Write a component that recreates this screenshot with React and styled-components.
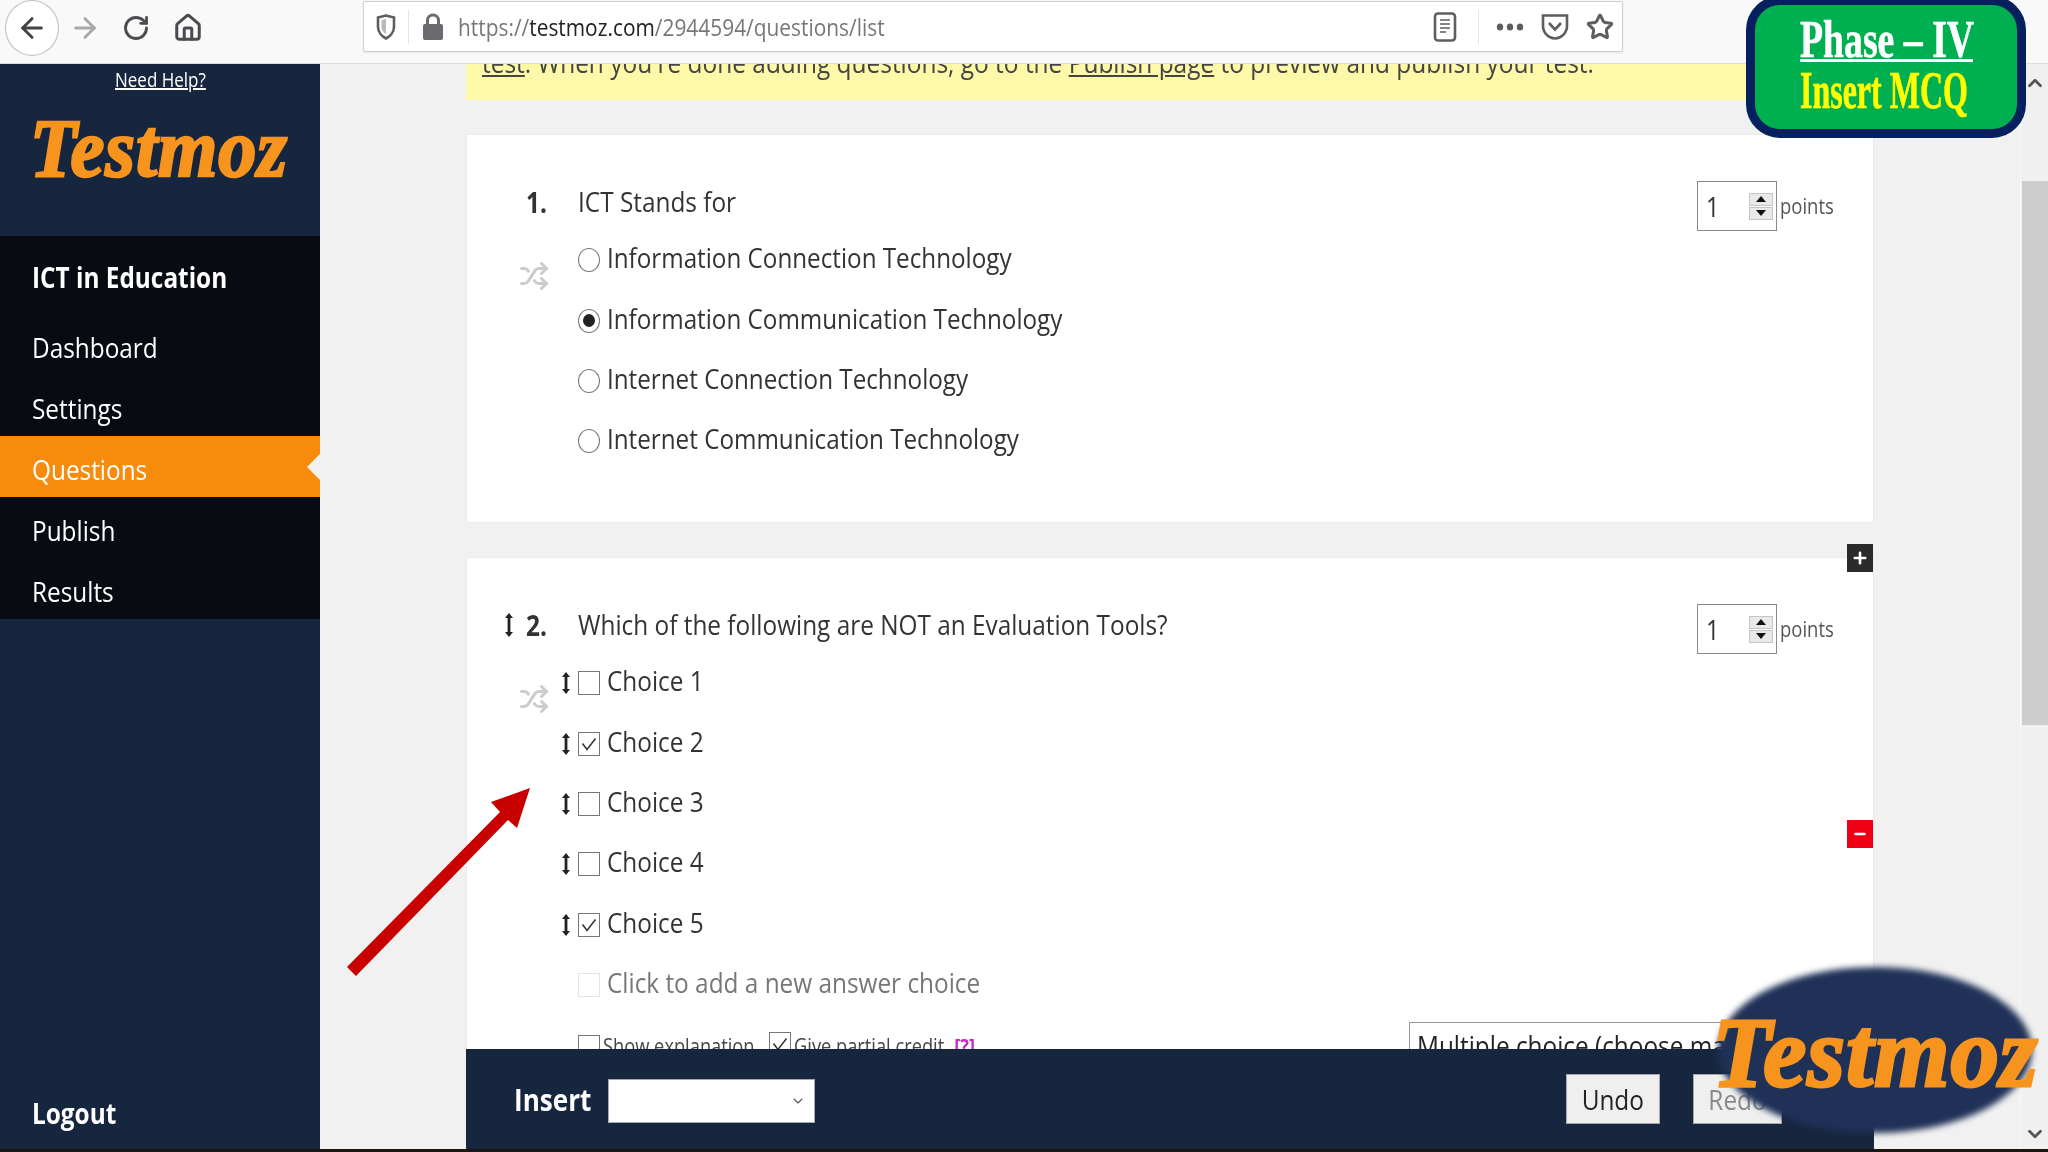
import React from 'react';
import styled, { createGlobalStyle, css } from 'styled-components';
import { ArrowLeft, ArrowRight, RotateCw, House, Star, Shuffle, ChevronUp, ChevronDown, Plus, Minus } from 'lucide-react';

const GlobalStyle = createGlobalStyle`
  html, body { margin: 0; padding: 0; background: #f1f1f2; overflow: hidden; }
  * { box-sizing: border-box; }
`;

const squeeze = css`
  display: inline-block;
  white-space: nowrap;
  transform: scaleX(${props => props.$sx || 0.87});
  transform-origin: left center;
`;

const Page = styled.div`
  position: relative;
  width: 2048px;
  height: 1152px;
  display: flex;
  flex-direction: column;
  overflow: hidden;
  font-family: "Open Sans", sans-serif;
  color: #333;
`;

//===================================================
// ================= Browser toolbar ================
//===================================================

const Toolbar = styled.div`
  height: 64px;
  flex: none;
  display: flex;
  align-items: flex-start;
  padding-left: 5px;
  background: #f9f9fa;
  border-bottom: 1px solid #dcdcdc;
`;

const BackButton = styled.div`
  width: 54px;
  height: 56px;
  border-radius: 50%;
  background: #fff;
  border: 1px solid #bdbdbd;
  display: flex;
  align-items: center;
  justify-content: center;
  color: #444;
`;

const NavIcon = styled.div`
  width: 51.5px;
  height: 56px;
  display: flex;
  align-items: center;
  justify-content: center;
  color: ${props => props.$dim ? '#a9a9ab' : '#4a4a4f'};
`;

const AddressBar = styled.div`
  margin: 1px 0 0 149px;
  width: 1260px;
  height: 51px;
  display: flex;
  align-items: center;
  background: #fff;
  border: 1px solid #cfcfcf;
  border-radius: 2px;
  box-shadow: 0 1px 2px rgba(0, 0, 0, 0.08);
  color: #5d5d62;
`;

const BarIcon = styled.div`
  width: ${props => props.$w}px;
  flex: none;
  display: flex;
  align-items: center;
  justify-content: center;
`;

const BarDivider = styled.div`
  width: 1px;
  height: 34px;
  flex: none;
  background: #e6e6e6;
`;

const Url = styled.div`
  ${squeeze}
  flex: none;
  width: 722px;
  margin-left: 1px;
  font-size: 24px;
  color: #77777b;
  b { font-weight: 400; color: #222; }
`;

//===================================================
// ==================== Sidebar =====================
//===================================================

const Body = styled.div`
  flex: 1;
  min-height: 0;
  display: flex;
`;

const Sidebar = styled.div`
  width: 320px;
  flex: none;
  display: flex;
  flex-direction: column;
  background: #17263f;
  color: #fff;
`;

const SideHead = styled.div`
  height: 172px;
  flex: none;
  text-align: center;
`;

const NeedHelp = styled.a`
  ${squeeze}
  margin-top: 2px;
  font-size: 20px;
  line-height: 28px;
  color: #fff;
  text-decoration: underline;
  transform-origin: center;
`;

const LogoText = styled.div`
  ${squeeze}
  font-family: "Liberation Serif", serif;
  font-weight: 700;
  font-style: italic;
  font-size: ${props => props.$size}px;
  line-height: 1;
  letter-spacing: 1px;
  color: #f7941e;
  -webkit-text-stroke: ${props => props.$stroke}px #f7941e;
`;

const SideLogo = styled.div`
  padding: 14px 0 0 30px;
  text-align: left;
  height: 90px;
`;

const SideNav = styled.div`
  background: #080b12;
  flex: none;
`;

const NavTitle = styled.div`
  height: 78px;
  padding: 3px 0 0 32px;
  display: flex;
  align-items: center;
  font-size: 28px;
  font-weight: 700;
  span { ${squeeze} }
`;

const NavItem = styled.div`
  position: relative;
  height: 61px;
  padding: 4px 0 0 32px;
  display: flex;
  align-items: center;
  font-size: 28px;
  background: ${props => props.$active ? '#f68b0c' : 'transparent'};
  span { ${squeeze} }
  ${props => props.$active && css`
    &::after {
      content: '';
      position: absolute;
      right: 0;
      top: 18px;
      border-style: solid;
      border-width: 13px 13px 13px 0;
      border-color: transparent #f1f1f2 transparent transparent;
    }
  `}
`;

const Logout = styled.div`
  margin-top: auto;
  padding: 0 0 17px 32px;
  font-size: 28px;
  font-weight: 700;
  span { ${squeeze} }
`;

//===================================================
// ================== Main content ==================
//===================================================

const Main = styled.div`
  flex: 1;
  min-width: 0;
  display: flex;
  flex-direction: column;
  padding: 0 146px;
  background: #f1f1f2;
`;

const Scroller = styled.div`
  flex: 1;
  min-height: 0;
  overflow: hidden;
  display: flex;
  flex-direction: column;
  gap: 34px;
`;

const Notice = styled.div`
  height: 36px;
  flex: none;
  overflow: hidden;
  padding-left: 16px;
  background: #fdf9a9;
  font-size: 28px;
  color: #444;
  span {
    ${squeeze}
    display: block;
    width: max-content;
    margin-top: -20px;
    line-height: 36px;
  }
  a { color: #444; text-decoration: underline; }
`;

const Card = styled.div`
  position: relative;
  flex: ${props => props.$fill ? '1' : 'none'};
  height: ${props => props.$fill ? 'auto' : '389px'};
  display: flex;
  flex-direction: column;
  background: #fff;
  border: 1px solid #ebebeb;
`;

const CardClip = styled.div`
  flex: 1;
  min-height: 0;
  overflow: hidden;
  padding-top: 39px;
`;

const QuestionBody = styled.div`
  display: flex;
  align-items: flex-start;
  padding-right: 42px;
`;

const LeftCol = styled.div`
  width: 93px;
  flex: none;
  padding-left: 37px;
`;

const NumberRow = styled.div`
  height: 56px;
  display: flex;
  align-items: center;
  font-size: 28px;
  font-weight: 700;
  color: #333;
  span { ${squeeze} }
`;

const HandleSlot = styled.div`
  width: 22px;
  flex: none;
  display: flex;
  align-items: center;
  color: #222;
`;

const ShuffleIcon = styled.div`
  margin: 32px 0 0 15px;
  height: 28px;
  color: #ccc;
  display: flex;
  align-items: center;
`;

const Content = styled.div`
  flex: 1;
  min-width: 0;
`;

const QuestionTitle = styled.div`
  height: 56px;
  margin-left: 18px;
  display: flex;
  align-items: center;
  font-size: 28px;
  color: #333;
  span { ${squeeze} margin-top: -2px; }
`;

const OptionRow = styled.div`
  height: 60.4px;
  display: flex;
  align-items: center;
`;

const OptionHandle = styled.div`
  width: 18px;
  flex: none;
  padding-left: 1px;
  display: flex;
  align-items: center;
  color: #222;
`;

const OptionLabel = styled.div`
  margin: 0 0 6px 7px;
  font-size: 28px;
  color: ${props => props.$muted ? '#77777b' : '#333'};
  span { ${squeeze} }
`;

const Radio = styled.div`
  width: 22px;
  height: 24px;
  flex: none;
  border-radius: 50%;
  border: 1.5px solid #767676;
  display: flex;
  align-items: center;
  justify-content: center;
  &::after {
    content: '';
    display: ${props => props.$on ? 'block' : 'none'};
    width: 12px;
    height: 13px;
    border-radius: 50%;
    background: #222;
  }
`;

const CheckBox = styled.div`
  width: 22px;
  height: 24px;
  flex: none;
  display: flex;
  align-items: center;
  justify-content: center;
  background: #fff;
  border: 1.5px solid ${props => props.$muted ? '#e4e4e4' : '#767676'};
  color: #333;
`;

const Spinner = styled.div`
  width: 80px;
  height: 50px;
  margin-top: 7px;
  flex: none;
  display: flex;
  align-items: center;
  justify-content: space-between;
  padding: 0 3px 0 8px;
  border: 1.5px solid #8a8a8a;
  font-size: 27px;
  span { ${squeeze} }
`;

const SpinButtons = styled.div`
  width: 24px;
  height: 27px;
  display: flex;
  flex-direction: column;
  gap: 1px;
`;

const SpinButton = styled.div`
  flex: 1;
  display: flex;
  align-items: center;
  justify-content: center;
  background: #e9e9e9;
  border: 1px solid #c4c4c4;
  &::after {
    content: '';
    border-left: 5px solid transparent;
    border-right: 5px solid transparent;
    ${props => props.$down ? 'border-top: 6px solid #111;' : 'border-bottom: 6px solid #111;'}
  }
`;

const Points = styled.div`
  width: 51px;
  margin: 7px 0 0 3px;
  height: 50px;
  display: flex;
  align-items: center;
  font-size: 22px;
  color: #555;
  span { ${squeeze} margin-top: -3px; }
`;

const OptionsLine = styled.div`
  position: relative;
  display: flex;
  align-items: flex-start;
  margin-top: 7px;
  padding-left: 111px;
  height: 60px;
`;

const SmallBox = styled(CheckBox)`
  margin-top: ${props => props.$mt}px;
`;

const SmallLabel = styled.div`
  width: ${props => props.$w}px;
  flex: none;
  margin: 10px 0 0 3px;
  font-size: 21px;
  color: #444;
  span { ${squeeze} }
  i {
    font-style: normal;
    font-weight: 700;
    color: #c32bc3;
    margin-left: 6px;
  }
`;

const TypeSelect = styled.div`
  margin-left: auto;
  margin-right: 84px;
  width: 380px;
  height: 60px;
  flex: none;
  padding: 3px 0 0 7px;
  border: 1.5px solid #9a9a9a;
  font-size: 28px;
  color: #222;
  span { ${squeeze} }
`;

const SideButton = styled.div`
  position: absolute;
  right: 0;
  top: ${props => props.$top}px;
  width: 26px;
  height: 28px;
  display: flex;
  align-items: center;
  justify-content: center;
  color: #fff;
  background: ${props => props.$bg};
`;

//===================================================
// ==================== Footer ======================
//===================================================

const Footer = styled.div`
  position: relative;
  height: 100px;
  flex: none;
  display: flex;
  align-items: center;
  padding-left: 48px;
  background: #17263f;
  color: #fff;
`;

const InsertLabel = styled.div`
  width: 94px;
  font-size: 30px;
  font-weight: 700;
  span { ${squeeze} }
`;

const InsertSelect = styled.div`
  width: 207px;
  height: 44px;
  margin-top: 4px;
  display: flex;
  align-items: center;
  justify-content: flex-end;
  padding-right: 8px;
  background: #fff;
  border: 1px solid #a4a8b4;
  color: #555;
`;

const ActionButton = styled.div`
  width: ${props => props.$w}px;
  height: 50px;
  margin: 0 0 0 ${props => props.$ml}px;
  display: flex;
  align-items: center;
  justify-content: center;
  background: #efefef;
  border: 1px solid #a8a8a8;
  font-size: 28px;
  color: ${props => props.$off ? '#8a8a8a' : '#222'};
  span { ${squeeze} transform-origin: center; }
`;

const Scrollbar = styled.div`
  width: 28px;
  flex: none;
  display: flex;
  flex-direction: column;
  align-items: center;
  background: #f0f0f1;
  border-left: 1px solid #fafafa;
  color: #555;
`;

const ScrollArrow = styled.div`
  height: ${props => props.$h}px;
  flex: none;
  display: flex;
  align-items: center;
  justify-content: center;
`;

const ScrollGap = styled.div`
  flex: ${props => props.$h ? 'none' : '1'};
  height: ${props => props.$h ? `${props.$h}px` : 'auto'};
`;

const ScrollThumb = styled.div`
  width: 26px;
  height: 544px;
  flex: none;
  background: #cdcdcd;
`;

const BottomStrip = styled.div`
  height: 3px;
  flex: none;
  background: #1c1512;
`;

//===================================================
// ==================== Overlays ====================
//===================================================

const PhaseBadge = styled.div`
  position: absolute;
  left: 1746px;
  top: -4px;
  width: 280px;
  height: 142px;
  padding-top: 12px;
  display: flex;
  flex-direction: column;
  align-items: center;
  background: #00b050;
  border: 9px solid #04205f;
  border-radius: 34px;
  font-family: "Liberation Serif", serif;
  font-weight: 700;
`;

const PhaseLine = styled.div`
  width: 173px;
  height: ${props => props.$h}px;
  color: ${props => props.$color};
  font-size: 52px;
  line-height: ${props => props.$h}px;
  white-space: nowrap;
  border-bottom: ${props => props.$rule ? '3px solid #fff' : 'none'};
  -webkit-text-stroke: 0.6px ${props => props.$color};
  span { ${squeeze} }
`;

const RedArrow = styled.svg`
  position: absolute;
  left: 340px;
  top: 780px;
`;

const Blob = styled.div`
  position: absolute;
  left: 1718px;
  top: 967px;
  width: 314px;
  height: 166px;
  border-radius: 50%;
  background: #1f3157;
  filter: blur(3px);
`;

const BlobLogo = styled.div`
  position: absolute;
  left: 1712px;
  top: 1003px;
`;

//===================================================
// ================== Small drawings ================
//===================================================

const UpDown = ({ h = 20 }) => (
  <svg width="10" height={h} viewBox={`0 0 10 ${h}`}>
    <path d={`M5 0L9 5H6.4V${h - 5}H9L5 ${h}L1 ${h - 5}H3.6V5H1Z`} fill="currentColor" />
  </svg>
);

const Tick = () => (
  <svg width="18" height="18" viewBox="0 0 18 18" fill="none">
    <path d="M2.5 8.5L7 14.5L15.5 3.5" stroke="currentColor" strokeWidth="1.5" />
  </svg>
);

const ShieldIcon = () => (
  <svg width="20" height="26" viewBox="0 0 20 26" fill="none">
    <path d="M2 3.5L10 1.5L18 3.5V13C18 19 13 23 10 24.5C7 23 2 19 2 13Z" stroke="#5d5d62" strokeWidth="2.6" />
    <path d="M10 5V20C7.5 18.5 5.5 16 5.5 13V6Z" fill="#b9b9bb" />
  </svg>
);

const LockIcon = () => (
  <svg width="22" height="28" viewBox="0 0 22 28">
    <path d="M5.5 12V7.5a5.5 5.5 0 0 1 11 0V12" fill="none" stroke="#6a6a6f" strokeWidth="3" />
    <rect x="1" y="11" width="20" height="16" rx="2" fill="#6a6a6f" />
  </svg>
);

const ReaderIcon = () => (
  <svg width="24" height="30" viewBox="0 0 24 30" fill="none">
    <rect x="2" y="1.5" width="20" height="27" rx="3" stroke="#5d5d62" strokeWidth="2.6" />
    <path d="M7 8H17M7 12H17M7 16H17M7 20H13" stroke="#5d5d62" strokeWidth="1.6" />
  </svg>
);

const DotsIcon = () => (
  <svg width="28" height="10" viewBox="0 0 28 10">
    <ellipse cx="4" cy="5" rx="3.2" ry="3.6" fill="#5d5d62" />
    <ellipse cx="14" cy="5" rx="3.2" ry="3.6" fill="#5d5d62" />
    <ellipse cx="24" cy="5" rx="3.2" ry="3.6" fill="#5d5d62" />
  </svg>
);

const PocketIcon = () => (
  <svg width="28" height="28" viewBox="0 0 28 28" fill="none">
    <path d="M2 2.5H26V13C26 20 20 25.5 14 25.5C8 25.5 2 20 2 13Z" stroke="#5d5d62" strokeWidth="2.6" />
    <path d="M8 10L14 16.5L20 10" stroke="#5d5d62" strokeWidth="2.6" />
  </svg>
);

const questionOne = [
  { text: 'Information Connection Technology' },
  { text: 'Information Communication Technology', on: true },
  { text: 'Internet Connection Technology' },
  { text: 'Internet Communication Technology' },
];

const questionTwo = [
  { text: 'Choice 1' },
  { text: 'Choice 2', on: true },
  { text: 'Choice 3' },
  { text: 'Choice 4' },
  { text: 'Choice 5', on: true },
];

const navItems = ['Dashboard', 'Settings', 'Questions', 'Publish', 'Results'];

const PointsField = () => (
  <>
    <Spinner>
      <span>1</span>
      <SpinButtons>
        <SpinButton />
        <SpinButton $down />
      </SpinButtons>
    </Spinner>
    <Points $sx={0.84}><span>points</span></Points>
  </>
);

export default function App() {
  return (
    <Page>
      <GlobalStyle />
      <Toolbar>
        <BackButton><ArrowLeft size={32} strokeWidth={2.2} /></BackButton>
        <NavIcon $dim><ArrowRight size={32} strokeWidth={2.2} /></NavIcon>
        <NavIcon><RotateCw size={28} strokeWidth={2.4} /></NavIcon>
        <NavIcon><House size={30} strokeWidth={2.4} /></NavIcon>
        <AddressBar>
          <BarIcon $w={44}><ShieldIcon /></BarIcon>
          <BarDivider />
          <BarIcon $w={48}><LockIcon /></BarIcon>
          <Url>https://<b>testmoz.com</b>/2944594/questions/list</Url>
          <BarIcon $w={250}><span /></BarIcon>
          <BarIcon $w={30}><ReaderIcon /></BarIcon>
          <BarIcon $w={18}><span /></BarIcon>
          <BarDivider />
          <BarIcon $w={62}><DotsIcon /></BarIcon>
          <BarIcon $w={28}><PocketIcon /></BarIcon>
          <BarIcon $w={62}><Star size={28} strokeWidth={2.6} /></BarIcon>
        </AddressBar>
      </Toolbar>

      <Body>
        <Sidebar>
          <SideHead>
            <NeedHelp $sx={0.85}>Need Help?</NeedHelp>
            <SideLogo>
              <LogoText $size={82} $stroke={2.6} $sx={0.93}>Testmoz</LogoText>
            </SideLogo>
          </SideHead>
          <SideNav>
            <NavTitle><span>ICT in Education</span></NavTitle>
            {navItems.map(item => (
              <NavItem key={item} $active={item === 'Questions'}><span>{item}</span></NavItem>
            ))}
          </SideNav>
          <Logout><span>Logout</span></Logout>
        </Sidebar>

        <Main>
          <Scroller>
            <Notice $sx={0.873}>
              <span><a>test</a>. When you're done adding questions, go to the <a>Publish page</a> to preview and publish your test.</span>
            </Notice>

            <Card>
              <CardClip>
                <QuestionBody>
                  <LeftCol>
                    <NumberRow><HandleSlot /><span>1.</span></NumberRow>
                    <ShuffleIcon><Shuffle size={30} strokeWidth={2.4} /></ShuffleIcon>
                  </LeftCol>
                  <Content>
                    <QuestionTitle><span>ICT Stands for</span></QuestionTitle>
                    {questionOne.map(option => (
                      <OptionRow key={option.text}>
                        <OptionHandle />
                        <Radio $on={option.on} />
                        <OptionLabel $sx={0.865}><span>{option.text}</span></OptionLabel>
                      </OptionRow>
                    ))}
                  </Content>
                  <PointsField />
                </QuestionBody>
              </CardClip>
            </Card>

            <Card $fill>
              <SideButton $top={-14} $bg="#2b2b2b"><Plus size={18} strokeWidth={3.5} /></SideButton>
              <SideButton $top={262} $bg="#f00014"><Minus size={16} strokeWidth={3.5} /></SideButton>
              <CardClip>
                <QuestionBody>
                  <LeftCol>
                    <NumberRow>
                      <HandleSlot><UpDown h={24} /></HandleSlot>
                      <span>2.</span>
                    </NumberRow>
                    <ShuffleIcon><Shuffle size={30} strokeWidth={2.4} /></ShuffleIcon>
                  </LeftCol>
                  <Content>
                    <QuestionTitle><span>Which of the following are NOT an Evaluation Tools?</span></QuestionTitle>
                    {questionTwo.map(option => (
                      <OptionRow key={option.text}>
                        <OptionHandle><UpDown h={22} /></OptionHandle>
                        <CheckBox>{option.on && <Tick />}</CheckBox>
                        <OptionLabel><span>{option.text}</span></OptionLabel>
                      </OptionRow>
                    ))}
                    <OptionRow>
                      <OptionHandle />
                      <CheckBox $muted />
                      <OptionLabel $muted><span>Click to add a new answer choice</span></OptionLabel>
                    </OptionRow>
                  </Content>
                  <PointsField />
                </QuestionBody>
                <OptionsLine>
                  <SmallBox $mt={13} />
                  <SmallLabel $w={166}><span>Show explanation</span></SmallLabel>
                  <SmallBox $mt={10}><Tick /></SmallBox>
                  <SmallLabel $w={190}><span>Give partial credit <i>[?]</i></span></SmallLabel>
                  <TypeSelect><span>Multiple choice (choose many)</span></TypeSelect>
                </OptionsLine>
              </CardClip>
            </Card>
          </Scroller>

          <Footer>
            <InsertLabel><span>Insert</span></InsertLabel>
            <InsertSelect><ChevronDown size={16} strokeWidth={1.6} /></InsertSelect>
            <ActionButton $w={94} $ml={751}><span>Undo</span></ActionButton>
            <ActionButton $w={89} $ml={33} $off><span>Redo</span></ActionButton>
          </Footer>
        </Main>

        <Scrollbar>
          <ScrollArrow $h={37}><ChevronUp size={22} strokeWidth={3} /></ScrollArrow>
          <ScrollGap $h={80} />
          <ScrollThumb />
          <ScrollGap />
          <ScrollArrow $h={30}><ChevronDown size={22} strokeWidth={3} /></ScrollArrow>
        </Scrollbar>
      </Body>
      <BottomStrip />

      <RedArrow width="200" height="200" viewBox="0 0 200 200">
        <path d="M7 187L160 32L151 22L190 8L177 48L168 40L16 196Z" fill="#c80000" />
      </RedArrow>

      <PhaseBadge>
        <PhaseLine $h={45} $color="#fff" $rule $sx={0.726}><span>Phase – IV</span></PhaseLine>
        <PhaseLine $h={58} $color="#ffff00" $sx={0.615}><span>Insert MCQ</span></PhaseLine>
      </PhaseBadge>

      <Blob />
      <BlobLogo>
        <LogoText $size={100} $stroke={3} $sx={0.97}>Testmoz</LogoText>
      </BlobLogo>
    </Page>
  );
}
